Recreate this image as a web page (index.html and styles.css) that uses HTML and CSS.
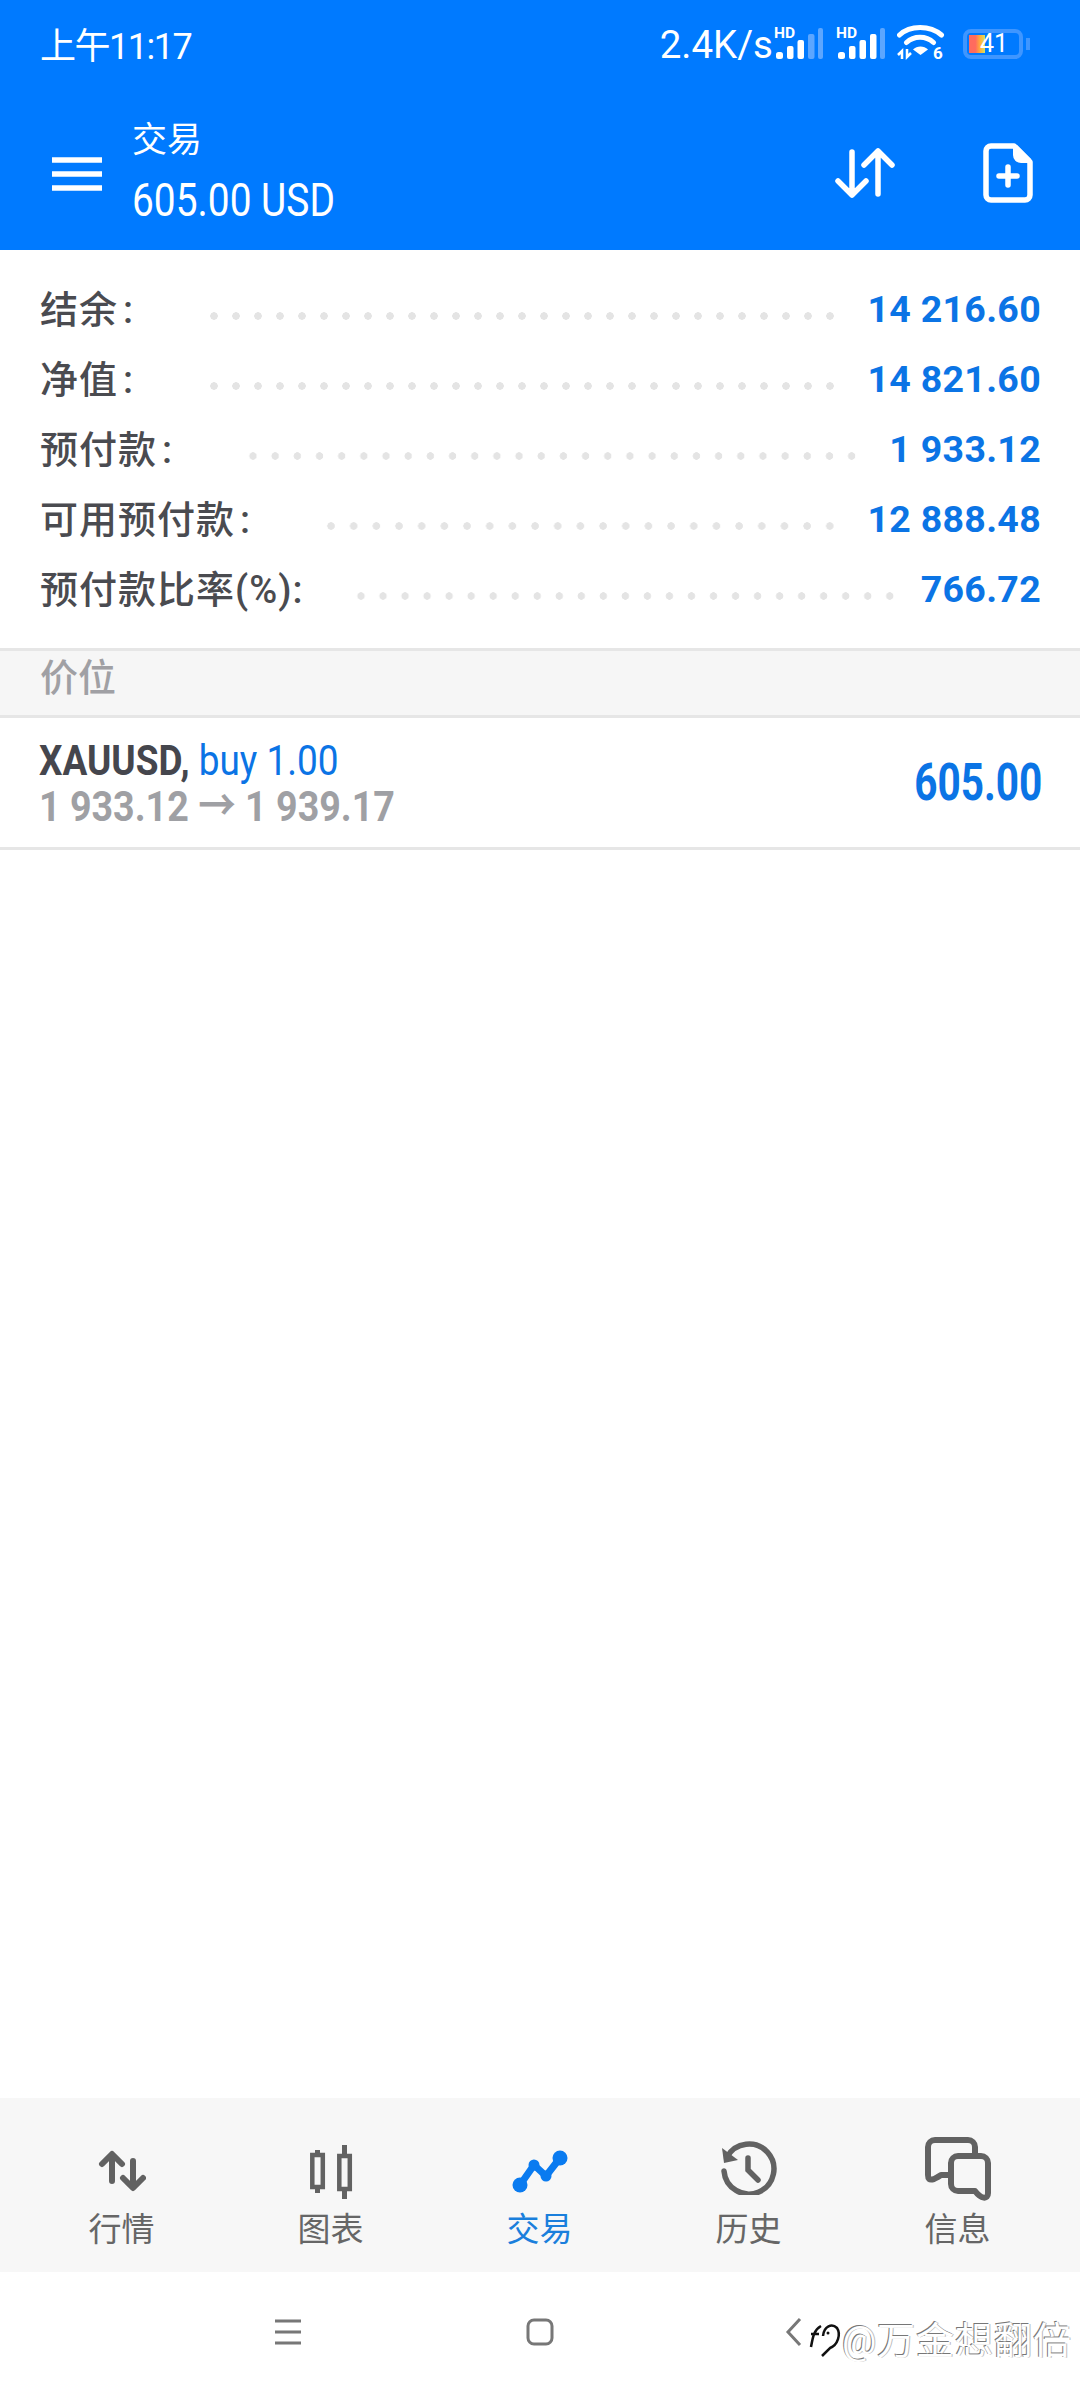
FILE: index.html
```html
<!DOCTYPE html>
<html lang="zh">
<head>
  <meta charset="UTF-8" />
  <meta name="viewport" content="width=device-width, initial-scale=1.0"/>
  <title>交易</title>
  <link rel="stylesheet" href="styles.css">
</head>
<body>
  <div class="app">
    <header class="top">
      <div class="status">
        <span class="clock">上午11:17</span>
        <div class="status-right">
          <span class="speed">2.4K/s</span>
          <svg class="sim sim-one" width="50" height="40" viewBox="0 0 50 40">
            <text x="1" y="15" class="hd">HD</text>
            <rect x="3" y="29" width="7" height="7" rx="2.5" fill="#fff"/>
            <rect x="14" y="23" width="6.5" height="13" rx="2" fill="#fff"/>
            <rect x="24.5" y="17" width="6.5" height="19" rx="2" fill="#fff"/>
            <rect x="35" y="11" width="6.5" height="25" rx="2" fill="#5ca6ff"/>
            <rect x="45" y="5" width="5" height="31" rx="2" fill="#5ca6ff"/>
          </svg>
          <svg class="sim sim-two" width="50" height="40" viewBox="0 0 50 40">
            <text x="1" y="15" class="hd">HD</text>
            <rect x="3" y="29" width="7" height="7" rx="2.5" fill="#fff"/>
            <rect x="14" y="23" width="6.5" height="13" rx="2" fill="#fff"/>
            <rect x="24.5" y="17" width="6.5" height="19" rx="2" fill="#fff"/>
            <rect x="35" y="11" width="6.5" height="25" rx="2" fill="#fff"/>
            <rect x="45" y="5" width="5" height="31" rx="2" fill="#5ca6ff"/>
          </svg>
          <svg class="wifi" width="48" height="40" viewBox="0 0 48 40">
            <path d="M2.5 11C13 1 33 1 44.5 11M9.5 18.5C17 11.5 29 11.5 36.5 18.5" fill="none" stroke="#fff" stroke-width="5" stroke-linecap="round"/>
            <path d="M16 25.5C20 21.5 27 21.5 31 25.5L23.5 31Z" fill="#fff"/>
            <path d="M5 35V27L1 31M10 25V33L14 29" fill="none" stroke="#fff" stroke-width="2.5"/>
            <text x="36" y="35" class="wifi-six">6</text>
          </svg>
          <div class="battery">
            <div class="battery-body">
              <span class="battery-fill"></span>
              <span class="battery-num">41</span>
            </div>
            <span class="battery-tip"></span>
          </div>
        </div>
      </div>
      <div class="toolbar">
        <svg class="menu-icon" width="50" height="34" viewBox="0 0 50 34">
          <path d="M0 3H50M0 17H50M0 31H50" stroke="#fff" stroke-width="5.5"/>
        </svg>
        <div class="title-box">
          <div class="title">交易</div>
          <div class="subtitle">605.00 USD</div>
        </div>
        <svg class="sort-icon" width="60" height="50" viewBox="0 0 60 50">
          <path d="M17 4V47M3 33L17 47L31 33M43 46V3M29 17L43 3L57 17" fill="none" stroke="#fff" stroke-width="5.5" stroke-linecap="round" stroke-linejoin="round"/>
        </svg>
        <svg class="doc-icon" width="50" height="60" viewBox="0 0 50 60">
          <path d="M8 3H31L47 19V52A5 5 0 0 1 42 57H8A5 5 0 0 1 3 52V8A5 5 0 0 1 8 3Z" fill="none" stroke="#fff" stroke-width="5.5" stroke-linejoin="round"/>
          <path d="M30 2V12A8 8 0 0 0 38 20H48V16L34 2Z" fill="#fff"/>
          <path d="M25 24V42M16 33H34" stroke="#fff" stroke-width="5.5" stroke-linecap="round"/>
        </svg>
      </div>
    </header>

    <main class="content">
      <section class="summary">
        <div class="row">
          <span class="label">结余<span class="colon">:</span></span><span class="dots"></span><span class="value">14 216.60</span>
        </div>
        <div class="row">
          <span class="label">净值<span class="colon">:</span></span><span class="dots"></span><span class="value">14 821.60</span>
        </div>
        <div class="row">
          <span class="label">预付款<span class="colon">:</span></span><span class="dots"></span><span class="value">1 933.12</span>
        </div>
        <div class="row">
          <span class="label">可用预付款<span class="colon">:</span></span><span class="dots"></span><span class="value">12 888.48</span>
        </div>
        <div class="row row-tight">
          <span class="label">预付款比率(%):</span><span class="dots"></span><span class="value">766.72</span>
        </div>
      </section>

      <div class="section-head">价位</div>

      <div class="position">
        <div class="position-info">
          <div class="position-top"><b>XAUUSD,</b> <span class="position-side">buy 1.00</span></div>
          <div class="position-prices">1 933.12 → 1 939.17</div>
        </div>
        <div class="position-profit">605.00</div>
      </div>
    </main>

    <nav class="tabs">
      <div class="tab">
        <svg width="48" height="48" viewBox="0 0 48 48">
          <path d="M14 34V8M4 17L14 7L24 17M35 14V40M25 31L35 41L45 31" fill="none" stroke="#626262" stroke-width="6" stroke-linecap="round" stroke-linejoin="round"/>
        </svg>
        <span>行情</span>
      </div>
      <div class="tab">
        <svg class="candle-icon" width="44" height="54" viewBox="0 0 44 54">
          <path d="M7.5 5V48M34.5 0V54" stroke="#626262" stroke-width="5"/>
          <rect x="2.3" y="10" width="10.5" height="32" fill="#f7f7f7" stroke="#626262" stroke-width="4.5"/>
          <rect x="29.3" y="11" width="10.5" height="33" fill="#f7f7f7" stroke="#626262" stroke-width="4.5"/>
        </svg>
        <span>图表</span>
      </div>
      <div class="tab tab-active">
        <svg width="60" height="48" viewBox="0 0 60 48">
          <path d="M10 38L24 18L36 29L50 11" fill="none" stroke="#0a7bf0" stroke-width="7"/>
          <circle cx="10" cy="38" r="7.5" fill="#0a7bf0"/>
          <circle cx="24" cy="18" r="5.5" fill="#0a7bf0"/>
          <circle cx="36" cy="29" r="5.5" fill="#0a7bf0"/>
          <circle cx="50" cy="11" r="7.5" fill="#0a7bf0"/>
        </svg>
        <span>交易</span>
      </div>
      <div class="tab">
        <svg width="56" height="56" viewBox="0 0 56 56">
          <path d="M6 18A25 25 0 1 1 3 32" fill="none" stroke="#626262" stroke-width="5.5" stroke-linecap="round"/>
          <path d="M1 9L3 24L17 21Z" fill="#626262"/>
          <path d="M27 19V31L37 41" fill="none" stroke="#626262" stroke-width="5.5" stroke-linecap="round"/>
        </svg>
        <span>历史</span>
      </div>
      <div class="tab">
        <svg class="msg-icon" width="66" height="64" viewBox="0 0 66 64">
          <path d="M26 38H16C10 42 3 46 3 38V10A7 7 0 0 1 10 3H43A7 7 0 0 1 50 10V18" fill="none" stroke="#626262" stroke-width="6" stroke-linejoin="round"/>
          <path d="M33 19H56A7 7 0 0 1 63 26V56C63 63 56 62 50 54H33A7 7 0 0 1 26 47V26A7 7 0 0 1 33 19Z" fill="none" stroke="#626262" stroke-width="6" stroke-linejoin="round"/>
        </svg>
        <span>信息</span>
      </div>
    </nav>

    <footer class="sysnav">
      <svg class="sys-menu" width="28" height="26" viewBox="0 0 28 26">
        <path d="M1 2H27M1 13H27M1 24H27" stroke="#777" stroke-width="3"/>
      </svg>
      <svg class="sys-home" width="28" height="28" viewBox="0 0 28 28">
        <rect x="2" y="2" width="24" height="24" rx="6" fill="none" stroke="#777" stroke-width="3"/>
      </svg>
      <svg class="sys-back" width="18" height="30" viewBox="0 0 18 30">
        <path d="M15 2L3 15L15 28" fill="none" stroke="#777" stroke-width="3"/>
      </svg>
      <div class="watermark">
        <svg width="34" height="40" viewBox="0 0 34 40">
          <path d="M13 8C6 12 5 18 3 29M3 16H11M15 18C16 8 24 5 29 10C33 16 30 27 22 30L14 38" fill="none" stroke="#111" stroke-width="2.5"/>
          <circle cx="20" cy="15" r="1.5" fill="#111"/>
        </svg>
        <span>@万金想翻倍</span>
      </div>
    </footer>
  </div>
</body>
</html>
```

FILE: styles.css
```css
* {
  box-sizing: border-box;
}

body {
  margin: 0;
  background: #fff;
  font-family: Roboto, "Noto Sans CJK SC", sans-serif;
}

.app {
  width: 1080px;
  height: 2400px;
  display: flex;
  flex-direction: column;
  overflow: hidden;
}

.top {
  height: 250px;
  background: #007aff;
  color: #fff;
  flex-shrink: 0;
}

.status {
  height: 88px;
  padding: 0 50px 0 40px;
  display: flex;
  justify-content: space-between;
  align-items: center;
}

.clock {
  font-size: 36px;
  letter-spacing: -1.5px;
  margin-top: -2px;
}

.status-right {
  display: flex;
  align-items: center;
}

.speed {
  font-size: 38.5px;
}

.hd {
  font: 700 15.5px Roboto, sans-serif;
  fill: #fff;
}

.sim {
  margin-right: 12px;
  margin-top: -2px;
}

.wifi-six {
  font: 700 17px Roboto, sans-serif;
  fill: #fff;
}

.battery {
  margin-left: 18px;
  display: flex;
  align-items: center;
}

.battery-body {
  width: 60px;
  height: 30px;
  border: 4px solid #3f96ff;
  border-radius: 8px;
  position: relative;
  padding: 2px;
}

.battery-fill {
  display: block;
  width: 16px;
  height: 18px;
  background: linear-gradient(to right, #ff6b5e 40%, #ffb03a 70%, #d8e060);
}

.battery-num {
  position: absolute;
  left: 13px;
  top: -2px;
  font-size: 25px;
  line-height: 26px;
}

.battery-tip {
  width: 4px;
  height: 12px;
  margin-left: 3px;
  background: #3f96ff;
}

.toolbar {
  height: 162px;
  padding: 0 47px 0 52px;
  display: flex;
  align-items: center;
}

.menu-icon {
  flex-shrink: 0;
  margin-top: 10px;
}

.title-box {
  margin-left: 30px;
  margin-top: 12px;
  flex: 1;
}

.title {
  font-size: 35px;
  line-height: 50px;
}

.subtitle {
  font-size: 46px;
  line-height: 68px;
  transform: scaleX(0.845);
  transform-origin: left;
}

.sort-icon {
  margin-right: 88px;
  margin-top: 8px;
}

.doc-icon {
  margin-top: 8px;
}

.content {
  flex: 1;
}

.summary {
  padding: 23px 39px 0 40px;
  height: 398px;
}

.row {
  height: 70px;
  display: flex;
  align-items: center;
}

.label {
  font-size: 38px;
  font-weight: 500;
  color: #4a4b50;
  letter-spacing: 1px;
  margin-top: -3px;
}

.colon {
  margin-left: 5px;
}

.dots {
  flex: 1;
  height: 8px;
  margin: 16px 26px 0 69px;
  background-image: radial-gradient(circle, #e4e4e4 3.5px, transparent 4px);
  background-size: 22px 8px;
  background-repeat: space no-repeat;
}

.row-tight .dots {
  margin-left: 47px;
  margin-right: 20px;
}

.value {
  font-size: 37.5px;
  font-weight: 700;
  color: #0b74e5;
  letter-spacing: 0.3px;
  margin-top: 2px;
}

.section-head {
  height: 70px;
  background: #f6f6f6;
  border-top: 3px solid #e6e6e6;
  border-bottom: 3px solid #e6e6e6;
  padding-left: 40px;
  font-size: 38px;
  font-weight: 500;
  line-height: 54px;
  color: #a0a0a4;
}

.position {
  height: 132px;
  border-bottom: 3px solid #e6e6e6;
  padding: 0 38px 0 39px;
  display: flex;
  justify-content: space-between;
  align-items: center;
}

.position-top {
  font-size: 42px;
  line-height: 46px;
  color: #0b74e5;
  transform: scaleX(0.88);
  transform-origin: left;
}

.position-top b {
  color: #45464d;
}

.position-prices {
  font-size: 43px;
  line-height: 44px;
  font-weight: 700;
  color: #9fa0a4;
  transform: scaleX(0.875);
  transform-origin: left;
}

.position-profit {
  font-size: 52px;
  font-weight: 700;
  color: #0b74e5;
  transform: scaleX(0.78);
  transform-origin: right;
}

.tabs {
  height: 174px;
  background: #f7f7f7;
  display: grid;
  grid-template-columns: repeat(5, 209px);
  padding-left: 17px;
  flex-shrink: 0;
}

.tab {
  display: flex;
  flex-direction: column;
  align-items: center;
  justify-content: flex-end;
  padding-bottom: 21px;
  font-size: 33px;
  color: #666;
  gap: 8px;
}

.tab-active {
  color: #1a7fdc;
}

.candle-icon {
  margin-bottom: -4px;
  margin-left: 2px;
}

.msg-icon {
  margin-bottom: -6px;
}

.sysnav {
  height: 128px;
  flex-shrink: 0;
  position: relative;
}

.sysnav svg {
  position: absolute;
}

.sys-menu {
  left: 274px;
  top: 47px;
}

.sys-home {
  left: 526px;
  top: 46px;
}

.sys-back {
  left: 785px;
  top: 45px;
}

.watermark {
  position: absolute;
  left: 808px;
  top: 38px;
  display: flex;
  align-items: center;
  font-size: 38px;
  letter-spacing: 1px;
  color: #fff;
  text-shadow: -1px -1px 0 #777, 1px 0 0 #bbb;
}

.watermark svg {
  position: static;
}
```
